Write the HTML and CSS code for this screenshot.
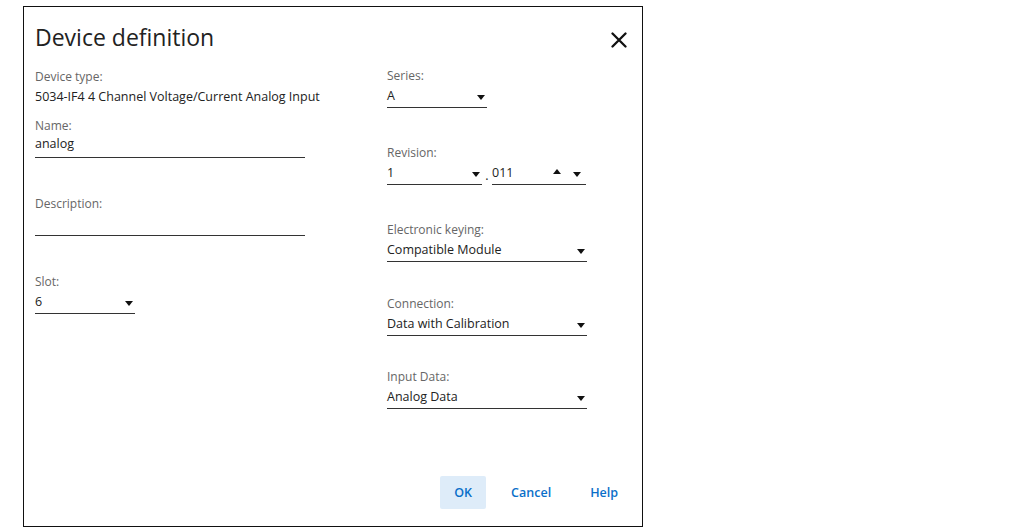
FILE: index.html
```html
<!DOCTYPE html>
<html lang="en">
<head>
    <meta charset="UTF-8">
    <title>Device definition</title>
    <link rel="stylesheet" href="styles.css">
</head>
<body>
    <div class="dialog">
        <!-- Header -->
        <header class="dialog-header">
            <h1>Device definition</h1>
            <button class="close-btn" aria-label="Close">
                <svg width="16" height="16" viewBox="0 0 16 16"><path d="M1.5 1.5 L14.5 14.5 M14.5 1.5 L1.5 14.5" stroke="#111" stroke-width="2.3" stroke-linecap="round"/></svg>
            </button>
        </header>

        <!-- Body -->
        <div class="dialog-body">
            <div class="col col-left">
                <div class="field field-type">
                    <div class="label">Device type:</div>
                    <div class="static">5034-IF4 4 Channel Voltage/Current Analog Input</div>
                </div>
                <div class="field">
                    <div class="label">Name:</div>
                    <div class="input w-270">analog</div>
                </div>
                <div class="field">
                    <div class="label">Description:</div>
                    <div class="input w-270"></div>
                </div>
                <div class="field">
                    <div class="label">Slot:</div>
                    <div class="select w-100"><span>6</span><i class="caret"></i></div>
                </div>
            </div>

            <div class="col col-right">
                <div class="field">
                    <div class="label">Series:</div>
                    <div class="select w-100"><span>A</span><i class="caret"></i></div>
                </div>
                <div class="field">
                    <div class="label">Revision:</div>
                    <div class="revision">
                        <div class="select w-95"><span>1</span><i class="caret"></i></div>
                        <span class="dot">.</span>
                        <div class="select w-94">
                            <span>011</span>
                            <div class="spin"><i class="caret up"></i><i class="caret"></i></div>
                        </div>
                    </div>
                </div>
                <div class="field field-keying">
                    <div class="label">Electronic keying:</div>
                    <div class="select w-200"><span>Compatible Module</span><i class="caret"></i></div>
                </div>
                <div class="field field-conn">
                    <div class="label">Connection:</div>
                    <div class="select w-200"><span>Data with Calibration</span><i class="caret"></i></div>
                </div>
                <div class="field">
                    <div class="label">Input Data:</div>
                    <div class="select w-200"><span>Analog Data</span><i class="caret"></i></div>
                </div>
            </div>
        </div>

        <!-- Footer -->
        <footer class="dialog-footer">
            <button class="btn btn-primary">OK</button>
            <button class="btn">Cancel</button>
            <button class="btn">Help</button>
        </footer>
    </div>
</body>
</html>
```

FILE: styles.css
```css
* {
    margin: 0;
    padding: 0;
    box-sizing: border-box;
    font-family: "Open Sans", "Noto Sans", sans-serif;
}

body {
    background-color: #fff;
}

.dialog {
    margin: 6px 0 0 23px;
    width: 620px;
    height: 521px;
    border: 1px solid #111;
    display: flex;
    flex-direction: column;
    background: #fff;
}

/* Header */
.dialog-header {
    display: flex;
    justify-content: space-between;
    align-items: flex-start;
    padding: 14px 11px 0 11px;
    height: 61px;
}

.dialog-header h1 {
    font-size: 23px;
    font-weight: 400;
    color: #222;
    line-height: 32px;
}

.close-btn {
    background: none;
    border: none;
    width: 24px;
    height: 24px;
    margin-top: 7px;
    display: flex;
    align-items: center;
    justify-content: center;
    cursor: pointer;
}

/* Body */
.dialog-body {
    display: flex;
    padding-left: 11px;
    flex: 1;
}

.col {
    display: flex;
    flex-direction: column;
}

.col-left {
    width: 352px;
    padding-top: 1px;
}

.field {
    margin-bottom: 37px;
}

.col-left .field {
    margin-bottom: 38px;
}

.col-left .field-type {
    margin-bottom: 11px;
}

.col-right .field-keying {
    margin-bottom: 34px;
}

.col-right .field-conn {
    margin-bottom: 33px;
}

.label {
    font-size: 12px;
    line-height: 16px;
    color: #666;
}

.static {
    font-size: 12.5px;
    line-height: 20px;
    color: #222;
    margin-top: 2px;
}

.input,
.select {
    height: 24px;
    border-bottom: 1px solid #333;
    font-size: 12.5px;
    line-height: 18px;
    color: #222;
    padding-top: 1px;
}

.select {
    display: flex;
    align-items: center;
    gap: 12px;
    padding-right: 2px;
}

.select span {
    flex: 1;
}

.caret {
    width: 0;
    height: 0;
    border-left: 4px solid transparent;
    border-right: 4px solid transparent;
    border-top: 5px solid #111;
    margin-top: 3px;
}

.caret.up {
    border-top: none;
    border-bottom: 5px solid #111;
    margin-top: -3px;
}

.spin {
    display: flex;
    align-items: center;
    gap: 12px;
    margin-right: 3px;
}

.w-270 { width: 270px; }
.w-200 { width: 200px; }
.w-100 { width: 100px; }
.w-95 { width: 95px; }
.w-94 { width: 94px; }

.revision {
    display: flex;
    align-items: flex-end;
}

.revision .dot {
    width: 10px;
    text-align: center;
    font-size: 12.5px;
    line-height: 18px;
    color: #222;
}

/* Footer */
.dialog-footer {
    display: flex;
    justify-content: flex-end;
    gap: 11px;
    padding: 0 10px 17px 0;
}

.btn {
    height: 33px;
    padding: 0 14px;
    background: none;
    border: none;
    border-radius: 2px;
    color: #0a6fc9;
    font-size: 12.5px;
    font-weight: 600;
    cursor: pointer;
}

.btn-primary {
    background-color: #deecf9;
}
```
